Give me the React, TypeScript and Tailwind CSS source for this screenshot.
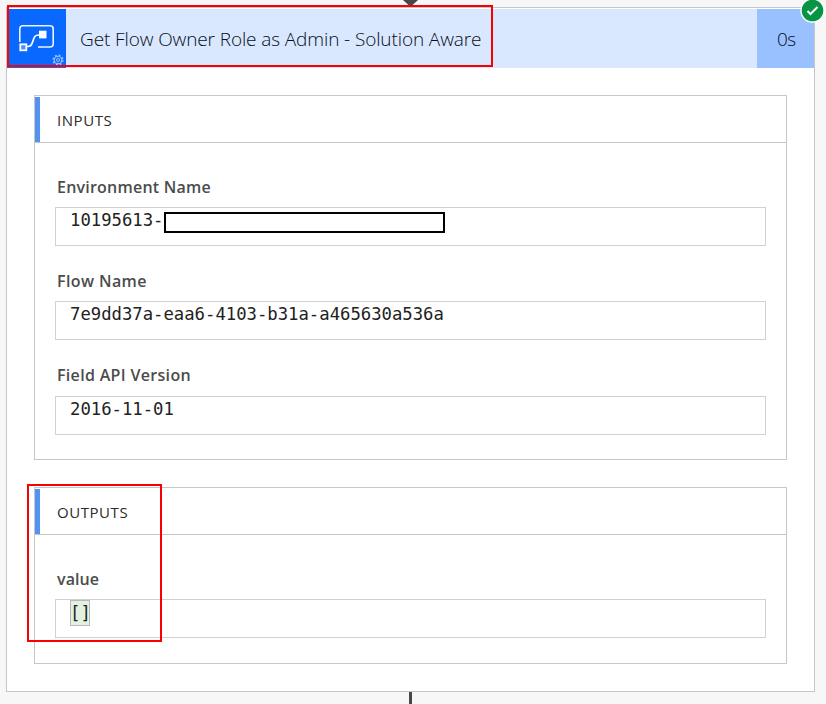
import type { ReactNode } from "react";

const mono = "font-['DejaVu_Sans_Mono','Liberation_Mono',monospace] text-[17.25px] leading-6 text-[#222]";

function Panel({ title, className, children }: { title: string; className: string; children: ReactNode }) {
  return (
    <section className={`w-[753px] border border-[#c4c6c9] ${className}`}>
      <header className="flex h-[47px] border-b border-[#c4c6c9] pt-px">
        <div className="w-[5px] bg-[#5492f2]" />
        <h2 className="whitespace-nowrap pl-[17px] text-[15px] leading-[46px] tracking-[0.55px] text-[#2b2b2b]">{title}</h2>
      </header>
      {children}
    </section>
  );
}

function Field({ label, className, labelClass, children }: { label: string; className: string; labelClass: string; children: ReactNode }) {
  return (
    <div className={`ml-5 w-[711px] ${className}`}>
      <div className="pl-0.5">
        <span className={`block whitespace-nowrap text-[16px] font-semibold leading-[26px] text-[#4c4c4c] ${labelClass}`}>{label}</span>
      </div>
      <div className="flex h-[39px] border border-[#d0d1d2] pl-[14px]">{children}</div>
    </div>
  );
}

export default function App() {
  return (
    <main className="relative h-[704px] w-[826px] overflow-hidden bg-[#f7f7f7] pl-[6px] pt-[7px] font-['Open_Sans','Noto_Sans',sans-serif]">
      <svg className="absolute left-[401px] top-0" width="18" height="7"><path d="M2 0h15L11 5.5H8Z" fill="#484848" /></svg>
      <article className="h-[685px] w-[809px] border border-[#c4c6c9] bg-white pt-px">
        <header className="flex h-[59px] bg-[#d9e7ff]">
          <div className="h-[59px] w-[59px] bg-[#0868ff]">
            <svg width="59" height="59" viewBox="0 0 59 59" fill="none" stroke="white">
              <path d="M12.8 33V20Q12.8 16.8 16 16.8H43Q46.2 16.8 46.2 20V35Q46.2 38 43 38H31" strokeWidth="1.6" opacity=".92" />
              <path d="M20 37.5H21Q24 37.5 25 34.5L27 29Q28 26 32 26" strokeWidth="1.7" />
              <rect x="32" y="21.7" width="7.5" height="7.7" fill="white" stroke="none" />
              <rect x="13.3" y="35.3" width="6" height="6" fill="#4690ff" strokeWidth="1.8" />
              <g stroke="#a5c8ff">
                <circle cx="51" cy="51" r="3.8" strokeWidth="1" />
                <circle cx="51" cy="51" r="1.5" strokeWidth=".9" />
                <circle cx="51" cy="51" r="4.9" strokeWidth="1.3" strokeDasharray="1.92 1.93" />
              </g>
            </svg>
          </div>
          <h1 className="flex-1 whitespace-nowrap pl-[14px] text-[19px] font-light leading-[61px] tracking-[-0.11px] text-[#060e20]">Get Flow Owner Role as Admin - Solution Aware</h1>
          <div className="w-[57px] bg-[#99c1ff] pl-5 text-[19px] font-light leading-[61px] tracking-[-0.5px] text-[#060e20]">0s</div>
        </header>
        <Panel title="INPUTS" className="ml-[27px] mt-[27px] h-[365px]">
          <Field label="Environment Name" className="mt-[31px]" labelClass="mb-[7px] tracking-[0.22px]">
            <span className={`${mono} w-[94px]`}>10195613-</span>
            <div className="mt-1 h-[21px] w-[281px] border-2 border-black bg-white" />
          </Field>
          <Field label="Flow Name" className="mt-[22px]" labelClass="mb-[7px] tracking-[0.4px]">
            <span className={mono}>7e9dd37a-eaa6-4103-b31a-a465630a536a</span>
          </Field>
          <Field label="Field API Version" className="mt-[22px]" labelClass="mb-2 tracking-[0.32px]">
            <span className={mono}>2016-11-01</span>
          </Field>
        </Panel>
        <Panel title="OUTPUTS" className="ml-[27px] mt-[27px] h-[177px]">
          <Field label="value" className="mt-[31px]" labelClass="mb-[7px] tracking-[0.1px]">
            <span className={`${mono} h-[26px] w-5 border border-[#b4bab4] bg-[#e3f1e1] indent-[-1px]`}>[]</span>
          </Field>
        </Panel>
      </article>
      <div className="ml-[403px] h-3 w-[3px] bg-[#484848]" />
      <div className="absolute left-[7px] top-[5px] h-[62px] w-[486px] border-2 border-[#fa0000]" />
      <div className="absolute left-[27px] top-[484px] h-[158px] w-[135px] border-2 border-[#fa0000]" />
      <svg className="absolute left-[800px] top-[-2px]" width="26" height="26">
        <circle cx="12.5" cy="12.5" r="11.5" fill="#079445" stroke="white" strokeWidth="1.4" />
        <path d="m7.5 13 3 3 7-7" fill="none" stroke="white" strokeWidth="2" />
      </svg>
    </main>
  );
}
